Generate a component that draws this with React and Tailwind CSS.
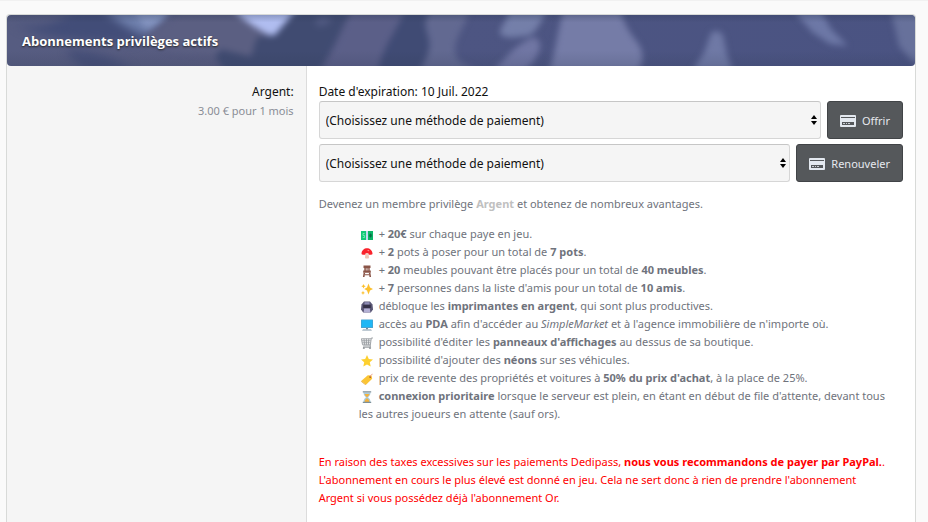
const CashIcon = () => (
    <>
        <rect x="0" y="2" width="12" height="9" fill="#0bb567" />
        <rect x="0" y="2" width="6" height="9" fill="#12c878" />
        <rect x="5" y="2" width="2" height="9" fill="#c9d8f2" />
        <ellipse cx="9.5" cy="6.5" rx="1.2" ry="2" fill="#0a6b44" />
        <path d="M3.6 4.5H2v2h1.6v2H1.8" fill="none" stroke="#7df0bb" strokeWidth="0.8" />
    </>
);

const MushroomIcon = () => (
    <>
        <path d="M4.5 7h3l.5 3.400c0 .8-.7 1.200-2 1.200s-2-.4-2-1.200z" fill="#efc4b4" />
        <path d="M.5 6.400C.8 3.200 3.200 1.200 6 1.200s5.200 2 5.500 5.200c0 1.200-1.500 1.600-3 1.400-1.600-.2-3.400-.2-5 0-1.500.2-3-.2-3-1.400z" fill="#f9232c" />
        <ellipse cx="6" cy="7.200" rx="1.800" ry="1.300" fill="#f3cfc4" />
        <ellipse cx="7.300" cy="3.600" rx="1" ry="0.700" fill="#ff8a8a" />
    </>
);

const ChairIcon = () => (
    <g fill="#8a5548">
        <path d="M2.500 .6h7v2.400h-.8V5.600h1.100v2.200H2.200V5.600h1.100V3h-.8z" />
        <path d="M4.800 3.200h.7v2.400h-.7zM6.600 3.200h.7v2.400h-.7z" fill="#fff" />
        <path d="M2.600 7.800h1.600L3.500 12H1.900zM7.800 7.800h1.600l.7 4.200H8.500zM4 9.200h4v1H4z" />
    </g>
);

const SparklesIcon = () => (
    <g fill="#fcc02e">
        <path d="M7.500 .6l1.500 3.900 3 1.500-3 1.600-1.500 3.900L6 7.600 3.200 6 6 4.500z" />
        <path d="M2.500 1l.7 1.500 1.500.7-1.500.8-.7 1.500L1.800 4 .3 3.200l1.500-.7zM2 7.800l.6 1.500 1.400.6-1.400.7L2 12l-.6-1.400L0 9.900l1.400-.6z" />
    </g>
);

const PrinterIcon = () => (
    <>
        <path d="M3 .6h6l2.500 2.900.5 5L9.800 11.400H2.200L0 8.500l.5-5z" fill="#5a5775" />
        <path d="M3.500 1.200h5V3.600h-5z" fill="#8f8db5" />
        <path d="M2.200 3.800h7.600v3.200H2.200z" fill="#343147" />
        <path d="M3.200 7.500h5.600l.6 4H2.600z" fill="#b3b0d4" />
    </>
);

const MonitorIcon = () => (
    <>
        <rect x="0" y="0.500" width="12" height="8.500" rx="0.500" fill="#4aa3cf" />
        <rect x="0.700" y="1.200" width="10.600" height="6.800" fill="#20b7f5" />
        <path d="M5 9h2v1.500H5z" fill="#73889a" />
        <path d="M2 10.200h8l1 1.500H1z" fill="#a9b8c4" />
    </>
);

const CartIcon = () => (
    <g fill="none" stroke="#969b9f" strokeWidth="0.900">
        <path d="M12 1h-1.700L9.200 9H2.200M.3 1.800h9.900M.5 1.800l1 6h7.800M.8 3.800h9M1.200 5.800h8.200M3 1.800l.5 6M5.400 1.800v6M7.800 1.800l-.4 6M9.200 9l.4 1.300H2" />
        <circle cx="2.800" cy="11.100" r="0.600" fill="#60666a" />
        <circle cx="9" cy="11.100" r="0.600" fill="#60666a" />
    </g>
);

const StarIcon = () => (
    <path
        d="M6 0l1.800 4 4.200.4-3.200 2.900.9 4.300L6 9.400l-3.700 2.200.9-4.300L0 4.400 4.200 4z"
        fill="#fdd030"
    />
);

const TagIcon = () => (
    <>
        <path d="M6.800 2.200l3.700.2.700 3.400-6.200 5.900-4.800-3.700z" fill="#fbc534" />
        <path d="M.2 8l4.800 3.700-.6.300L0 8.600z" fill="#e09a22" />
        <circle cx="9.200" cy="4" r="0.900" fill="#a5602c" />
        <path d="M9.200 4c.4-1.800 1.200-2.800 2.400-2.800" fill="none" stroke="#e58a7a" strokeWidth="0.700" />
    </>
);

const HourglassIcon = () => (
    <>
        <path d="M2.500 1.500h7c0 2.500-.9 3.500-2.500 4.700 1.600 1.300 2.500 2.300 2.500 4.800h-7c0-2.500.9-3.500 2.500-4.800-1.600-1.200-2.500-2.200-2.500-4.700z" fill="#a9cde0" />
        <path d="M3.600 3h4.800c-.3 1.300-1.100 2.200-2.400 3.200-1.300-1-2.100-1.900-2.400-3.200zM6 7.300c1.300.7 2.200 1.900 2.500 3.700h-5C3.800 9.200 4.700 8 6 7.300z" fill="#f4b23c" />
        <path d="M1.800 .2h8.400v1.300H1.800zM1.800 10.800h8.400V12H1.800z" fill="#7d9099" />
    </>
);

const advantages = [
    { icon: CashIcon, text: <>+ <b>20€</b> sur chaque paye en jeu.</> },
    { icon: MushroomIcon, text: <>+ <b>2</b> pots à poser pour un total de <b>7 pots</b>.</> },
    { icon: ChairIcon, text: <>+ <b>20</b> meubles pouvant être placés pour un total de <b>40 meubles</b>.</> },
    { icon: SparklesIcon, text: <>+ <b>7</b> personnes dans la liste d'amis pour un total de <b>10 amis</b>.</> },
    { icon: PrinterIcon, text: <>débloque les <b>imprimantes en argent</b>, qui sont plus productives.</> },
    { icon: MonitorIcon, text: <>accès au <b>PDA</b> afin d'accéder au <i>SimpleMarket</i> et à l'agence immobilière de n'importe où.</> },
    { icon: CartIcon, text: <>possibilité d'éditer les <b>panneaux d'affichages</b> au dessus de sa boutique.</> },
    { icon: StarIcon, text: <>possibilité d'ajouter des <b>néons</b> sur ses véhicules.</> },
    { icon: TagIcon, text: <>prix de revente des propriétés et voitures à <b>50% du prix d'achat</b>, à la place de 25%.</> },
    { icon: HourglassIcon, text: <><b>connexion prioritaire</b> lorsque le serveur est plein, en étant en début de file d'attente, devant tous les autres joueurs en attente (sauf ors).</> },
];

const HeaderArt = () => (
    <svg
        className="absolute inset-0 h-full w-full"
        viewBox="0 0 908 51"
        preserveAspectRatio="none"
        aria-hidden="true"
    >
        <defs>
            <filter id="soft" x="-5%" y="-20%" width="110%" height="140%" colorInterpolationFilters="sRGB">
                <feGaussianBlur stdDeviation="3" />
            </filter>
            <filter id="softer" x="-20%" y="-40%" width="140%" height="180%" colorInterpolationFilters="sRGB">
                <feGaussianBlur stdDeviation="5" />
            </filter>
            <linearGradient id="base" x1="0" x2="1" y1="0" y2="0">
                <stop offset="0" stopColor="#565c81" />
                <stop offset="0.250" stopColor="#585c80" />
                <stop offset="0.500" stopColor="#4d5582" />
                <stop offset="1" stopColor="#4a5382" />
            </linearGradient>
            <linearGradient id="shade" x1="0" x2="0" y1="0" y2="1">
                <stop offset="0" stopColor="#26324a" stopOpacity="0.250" />
                <stop offset="0.150" stopColor="#26324a" stopOpacity="0" />
                <stop offset="0.700" stopColor="#26324a" stopOpacity="0" />
                <stop offset="1" stopColor="#26324a" stopOpacity="0.150" />
            </linearGradient>
        </defs>
        <rect width="908" height="51" fill="url(#base)" />
        <g filter="url(#softer)">
            <path d="M6 8C30 16 50 8 70-6h34l40 26-18 8C90 24 40 28 6 8z" fill="#424d78" />
            <path d="M60 34c20 0 50 8 66 22H80C70 48 60 42 60 34z" fill="#464f78" />
            <path d="M96-6H160l-6 12-16 14C120 14 108 4 96-6z" fill="#6f80ad" />
        </g>
        <g filter="url(#soft)">
            <path d="M126-4H164L150 8 140 14z" fill="#8494c0" />
            <path d="M178-4h52l36 24-22 22-34-2-46-4-24-14z" fill="#5b5f82" />
            <path d="M225-6H292C282 4 276 18 266 22 252 16 238 6 225-6z" fill="#b0bdf0" />
            <path d="M288-4H344C336 10 330 24 324 36L312 56H218L208 42l6-8 30 8 6-20 18-2z" fill="#404b71" />
            <path d="M310 2c8-2 16 0 14 4s-12 8-16 4z" fill="#4f5880" />
            <path d="M344-4H398C390 14 380 26 376 40L372 56H314C324 40 334 20 344-4z" fill="#5b5f88" />
            <path d="M398-4H424C414 8 422 20 423 30s-6 18-10 26H371C374 36 388 18 398-4z" fill="#404b74" />
            <path d="M424-4H462C458 12 448 22 448 34s6 14 24 22H412C420 44 424 34 422 24S414 8 424-4z" fill="#626991" />
            <path d="M502-4H540C532 8 530 20 518 21s-16 3-24-1C490 14 500 8 502-4z" fill="#747fa9" />
            <path d="M524 23c6-2 10 4 9 10-3 10-8 18-18 23H486C498 44 508 30 524 23z" fill="#7076a3" />
            <path d="M556-4H614C616 8 624 20 631 28c6 10 6 18 0 28H542C548 40 550 20 556-4z" fill="#757ca7" />
            <path d="M704 18q6-5 12 2l4 20 6 16H685l12-18z" fill="#6f79a5" />
            <path d="M787-4H814l10 18 17 17-18-2-18-12z" fill="#6d78a6" />
            <path d="M884-4H915V50l-10-4-13-15z" fill="#67719b" />
        </g>
        <rect width="908" height="51" fill="url(#shade)" />
    </svg>
);

const CardIcon = () => (
    <svg className="h-3 w-4" viewBox="0 0 16 12" aria-hidden="true">
        <rect width="16" height="12" rx="1" fill="#e3e8ef" />
        <rect x="1" y="2" width="14" height="1" fill="#55585b" />
        <rect x="2" y="7" width="12" height="3" fill="#55585b" />
        <path d="M3 8.500h2M6 8.500h1M8 8.500h2" stroke="#c9cdd4" />
    </svg>
);

const PaymentRow = ({ name, action }) => (
    <form className="flex gap-1.5" onSubmit={(e) => e.preventDefault()}>
        <div className="relative min-w-0 flex-1">
            <select
                name={name}
                aria-label={`Méthode de paiement (${action})`}
                className="h-[38px] w-full appearance-none rounded-[3px] border border-[#d6d6d6] border-t-[#c6c6c6] bg-[#f5f5f5] px-1.5 pt-0.5 text-[12px] text-[#111]"
            >
                <option>(Choisissez une méthode de paiement)</option>
            </select>
            <svg
                className="pointer-events-none absolute right-1 top-3.5 h-2.5 w-1.5"
                viewBox="0 0 6 10"
                aria-hidden="true"
            >
                <path d="M3 0l3 4H0zM3 10l3-4H0z" fill="#000" />
            </svg>
        </div>
        <button
            type="submit"
            className="flex h-[38px] items-center gap-1.5 rounded-[3px] border border-[#414447] bg-[#55585b] px-3 pt-0.5 text-[11px] text-[#e6e9ee]"
        >
            <CardIcon />
            {action}
        </button>
    </form>
);

const App = () => {
    return (
        <div className="min-h-screen border-t border-[#f1f1f1] bg-[#fafafa] pl-1.5 pr-3 pt-[13px] font-['Noto_Sans','Open_Sans',sans-serif]">
            <section className="flex min-h-[calc(100vh-14px)] flex-col rounded-t-[4px] border border-b-0 border-[#d8dad8] bg-white">
                <header className="relative flex h-[51px] items-center overflow-hidden rounded-[4px] px-[15px]">
                    <HeaderArt />
                    <h2 className="relative pt-0.5 font-['Open_Sans',sans-serif] text-[13px] font-bold text-white [text-shadow:0_1px_2px_#222]">
                        Abonnements privilèges actifs
                    </h2>
                </header>
                <div className="flex flex-1">
                    <div className="w-[33%] shrink-0 border-r border-[#dcdcdc] bg-[#f5f5f5] px-3 pt-4 text-right">
                        <p className="text-[12px] leading-[19px] text-[#111]">Argent:</p>
                        <p className="text-[11px] leading-5 text-[#8a8d95]">3.00 € pour 1 mois</p>
                    </div>
                    <div className="min-w-0 flex-1 px-3 pb-4 pt-4 text-[11px] leading-[18px] text-[#6f737c]">
                        <p className="text-[12px] leading-[19px] text-[#111]">Date d'expiration: 10 Juil. 2022</p>
                        <div className="flex flex-col gap-[5px]">
                            <PaymentRow name="offrir" action="Offrir" />
                            <PaymentRow name="renouveler" action="Renouveler" />
                        </div>
                        <p className="mt-[13px]">
                            Devenez un membre privilège <b className="text-[#c0c0c0]">Argent</b> et obtenez de nombreux avantages.
                        </p>
                        <ul className="mt-3 pl-10 pr-2">
                            {advantages.map(({ icon: Icon, text }, i) => (
                                <li key={i}>
                                    <svg
                                        className="ml-0.5 mr-1.5 inline-block h-3 w-3"
                                        viewBox="0 0 12 12"
                                        aria-hidden="true"
                                    >
                                        <Icon />
                                    </svg>
                                    {text}
                                </li>
                            ))}
                        </ul>
                        <p className="mt-[30px] pr-4 text-[#f00]">
                            En raison des taxes excessives sur les paiements Dedipass, <b>nous vous recommandons de payer par PayPal.</b>.
                            <br />
                            L'abonnement en cours le plus élevé est donné en jeu. Cela ne sert donc à rien de prendre l'abonnement
                            Argent si vous possédez déjà l'abonnement Or.
                        </p>
                    </div>
                </div>
            </section>
        </div>
    );
};

export default App;
